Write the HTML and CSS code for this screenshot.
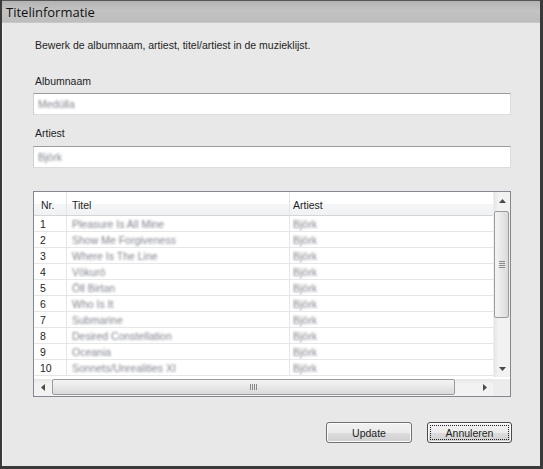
FILE: index.html
```html
<!DOCTYPE html>
<html>
<head>
<meta charset="utf-8">
<link rel="stylesheet" href="styles.css">
</head>
<body>
<div class="window">
  <div class="titlebar">Titelinformatie</div>
  <div class="content">
    <p class="desc">Bewerk de albumnaam, artiest, titel/artiest in de muzieklijst.</p>
    <div class="label first">Albumnaam</div>
    <div class="input"><span class="blur">Medúlla</span></div>
    <div class="label second">Artiest</div>
    <div class="input input2"><span class="blur">Björk</span></div>

    <div class="listbox">
      <div class="list-top">
        <div class="list-view">
          <div class="row header">
            <div class="c nr">Nr.</div>
            <div class="c titel">Titel</div>
            <div class="c artist">Artiest</div>
          </div>
          <div class="row"><div class="c nr">1</div><div class="c titel"><span class="blur">Pleasure Is All Mine</span></div><div class="c artist"><span class="blur">Björk</span></div></div>
          <div class="row"><div class="c nr">2</div><div class="c titel"><span class="blur">Show Me Forgiveness</span></div><div class="c artist"><span class="blur">Björk</span></div></div>
          <div class="row"><div class="c nr">3</div><div class="c titel"><span class="blur">Where Is The Line</span></div><div class="c artist"><span class="blur">Björk</span></div></div>
          <div class="row"><div class="c nr">4</div><div class="c titel"><span class="blur">Vökuró</span></div><div class="c artist"><span class="blur">Björk</span></div></div>
          <div class="row"><div class="c nr">5</div><div class="c titel"><span class="blur">Öll Birtan</span></div><div class="c artist"><span class="blur">Björk</span></div></div>
          <div class="row"><div class="c nr">6</div><div class="c titel"><span class="blur">Who Is It</span></div><div class="c artist"><span class="blur">Björk</span></div></div>
          <div class="row"><div class="c nr">7</div><div class="c titel"><span class="blur">Submarine</span></div><div class="c artist"><span class="blur">Björk</span></div></div>
          <div class="row"><div class="c nr">8</div><div class="c titel"><span class="blur">Desired Constellation</span></div><div class="c artist"><span class="blur">Björk</span></div></div>
          <div class="row"><div class="c nr">9</div><div class="c titel"><span class="blur">Oceania</span></div><div class="c artist"><span class="blur">Björk</span></div></div>
          <div class="row"><div class="c nr">10</div><div class="c titel"><span class="blur">Sonnets/Unrealities XI</span></div><div class="c artist"><span class="blur">Björk</span></div></div>
        </div>
        <div class="vscroll">
          <div class="sbtn">
            <svg width="7" height="4" viewBox="0 0 7 4"><path d="M3.5 0 L7 4 L0 4 Z" fill="#4a4a4a"/></svg>
          </div>
          <div class="vtrack">
            <div class="vthumb">
              <svg width="6" height="8" viewBox="0 0 6 8"><path d="M0 0.5H6M0 2.5H6M0 4.5H6M0 6.5H6" stroke="#8a8a8a" stroke-width="1"/></svg>
            </div>
          </div>
          <div class="sbtn">
            <svg width="7" height="4" viewBox="0 0 7 4"><path d="M0 0 L7 0 L3.5 4 Z" fill="#4a4a4a"/></svg>
          </div>
        </div>
      </div>
      <div class="list-bottom">
        <div class="hscroll">
          <div class="hbtn">
            <svg width="4" height="7" viewBox="0 0 4 7"><path d="M4 0 L4 7 L0 3.5 Z" fill="#4a4a4a"/></svg>
          </div>
          <div class="htrack">
            <div class="hthumb">
              <svg width="8" height="6" viewBox="0 0 8 6"><path d="M0.5 0V6M2.5 0V6M4.5 0V6M6.5 0V6" stroke="#8a8a8a" stroke-width="1"/></svg>
            </div>
          </div>
          <div class="hbtn">
            <svg width="4" height="7" viewBox="0 0 4 7"><path d="M0 0 L4 3.5 L0 7 Z" fill="#4a4a4a"/></svg>
          </div>
        </div>
        <div class="corner"></div>
      </div>
    </div>

    <div class="buttons">
      <button class="btn">Update</button>
      <button class="btn default"><span class="focus">Annuleren</span></button>
    </div>
  </div>
</div>
</body>
</html>
```

FILE: styles.css
```css
html, body {
  margin: 0;
  padding: 0;
  background: #e8e8e8;
}

.window {
  width: 543px;
  height: 469px;
  box-sizing: border-box;
  border-left: 2px solid #3a3a3a;
  border-right: 3px solid #3a3a3a;
  border-bottom: 3px solid #3a3a3a;
  background: #e8e8e8;
  display: flex;
  flex-direction: column;
  font-family: "Liberation Sans", Arial, sans-serif;
  font-size: 10.5px;
  color: #1e1e1e;
}

.titlebar {
  height: 21px;
  border-top: 1px solid #555;
  background: linear-gradient(#b3b3b3, #c3c3c3 45%, #bdbdbd);
  font-family: "Open Sans", "Liberation Sans", sans-serif;
  font-size: 13px;
  line-height: 22px;
  padding-left: 4px;
  color: #111;
  border-bottom: 1px solid #c8c8c8;
}

.content {
  flex: 1;
  display: flex;
  flex-direction: column;
  padding: 15px 29px 0 31px;
  border-left: 1px solid #f6f6f6;
}

.desc {
  margin: 0 0 0 1px;
  line-height: 14px;
}

.label {
  line-height: 14px;
  padding-left: 1px;
}
.label.first { margin-top: 22px; }
.label.second { margin-top: 11px; }

.input {
  margin-top: 5px;
  height: 22px;
  box-sizing: border-box;
  background: #fff;
  border: 1px solid #dcdcdc;
  border-top-color: #9c9c9c;
  border-left-color: #d0d0d0;
  padding-left: 4px;
  line-height: 20px;
  margin-left: -1px;
}
.input2 { margin-top: 6px; }

.blur {
  color: #80848c;
  filter: blur(1.2px);
}

.listbox {
  margin-top: 23px;
  margin-left: -1px;
  height: 206px;
  box-sizing: border-box;
  border: 1px solid #828790;
  background: #fff;
  display: flex;
  flex-direction: column;
}

.list-top {
  flex: 1;
  display: flex;
  min-height: 0;
}

.list-view {
  flex: 1;
  display: flex;
  flex-direction: column;
}

.row {
  display: flex;
  height: 16px;
  box-sizing: border-box;
  border-bottom: 1px solid #e6e6e6;
}

.c {
  box-sizing: border-box;
  white-space: nowrap;
  overflow: hidden;
  line-height: 17px;
}
.c.nr {
  width: 33px;
  padding-left: 6px;
  border-right: 1px solid #e6e6e6;
}
.c.titel {
  width: 223px;
  padding-left: 5px;
  border-right: 1px solid #e6e6e6;
}
.c.artist {
  flex: 1;
  padding-left: 3px;
}

.row.header {
  height: 24px;
  background: linear-gradient(#ffffff 0%, #ffffff 50%, #f5f6f7 51%, #f1f2f4 100%);
  border-bottom: 1px solid #d5d5d5;
}
.header .c {
  line-height: 26px;
  border-right-color: #e3e5e8;
}
.header .c.nr { padding-left: 7px; }

.vscroll {
  width: 17px;
  display: flex;
  flex-direction: column;
  background: linear-gradient(90deg, #e6e6e6, #f2f2f2 30%, #f2f2f2);
  border-left: 1px solid #efefef;
  box-sizing: border-box;
}

.sbtn {
  height: 17px;
  display: flex;
  align-items: center;
  justify-content: center;
}

.vtrack {
  flex: 1;
  padding-top: 2px;
}

.vthumb {
  height: 107px;
  margin: 0 1px 0 0;
  box-sizing: border-box;
  border: 1px solid #9b9b9b;
  border-radius: 2px;
  background: linear-gradient(90deg, #f4f4f4, #e8e8e8 50%, #d9d9d9);
  display: flex;
  align-items: center;
  justify-content: center;
}

.list-bottom {
  height: 17px;
  display: flex;
  margin-top: 2px;
}

.hscroll {
  flex: 1;
  display: flex;
  background: linear-gradient(#e6e6e6, #f2f2f2 30%, #f2f2f2);
}

.hbtn {
  width: 17px;
  display: flex;
  align-items: center;
  justify-content: center;
}

.htrack {
  flex: 1;
  padding-right: 21px;
  padding-left: 1px;
}

.hthumb {
  height: 16px;
  box-sizing: border-box;
  border: 1px solid #9b9b9b;
  border-radius: 2px;
  background: linear-gradient(#f4f4f4, #e8e8e8 50%, #d9d9d9);
  display: flex;
  align-items: center;
  justify-content: center;
}

.corner {
  width: 17px;
  background: #ececec;
}

.buttons {
  margin-top: 25px;
  margin-right: -1px;
  display: flex;
  justify-content: flex-end;
  gap: 15px;
}

.btn {
  width: 86px;
  height: 21px;
  box-sizing: border-box;
  border: 1px solid #707070;
  border-radius: 3px;
  background: linear-gradient(#f2f2f2 0%, #ebebeb 50%, #dddddd 51%, #cfcfcf 100%);
  font-family: "Liberation Sans", Arial, sans-serif;
  font-size: 10.5px;
  color: #1e1e1e;
  padding: 0;
  display: flex;
  align-items: center;
  justify-content: center;
  box-shadow: inset 0 0 0 1px #fbfbfb;
}

.btn.default {
  width: 85px;
  border-color: #4a4a4a;
  padding: 2px;
}

.focus {
  flex: 1;
  align-self: stretch;
  display: flex;
  align-items: center;
  justify-content: center;
  outline: 1px dotted #222;
  outline-offset: -1px;
}
```
